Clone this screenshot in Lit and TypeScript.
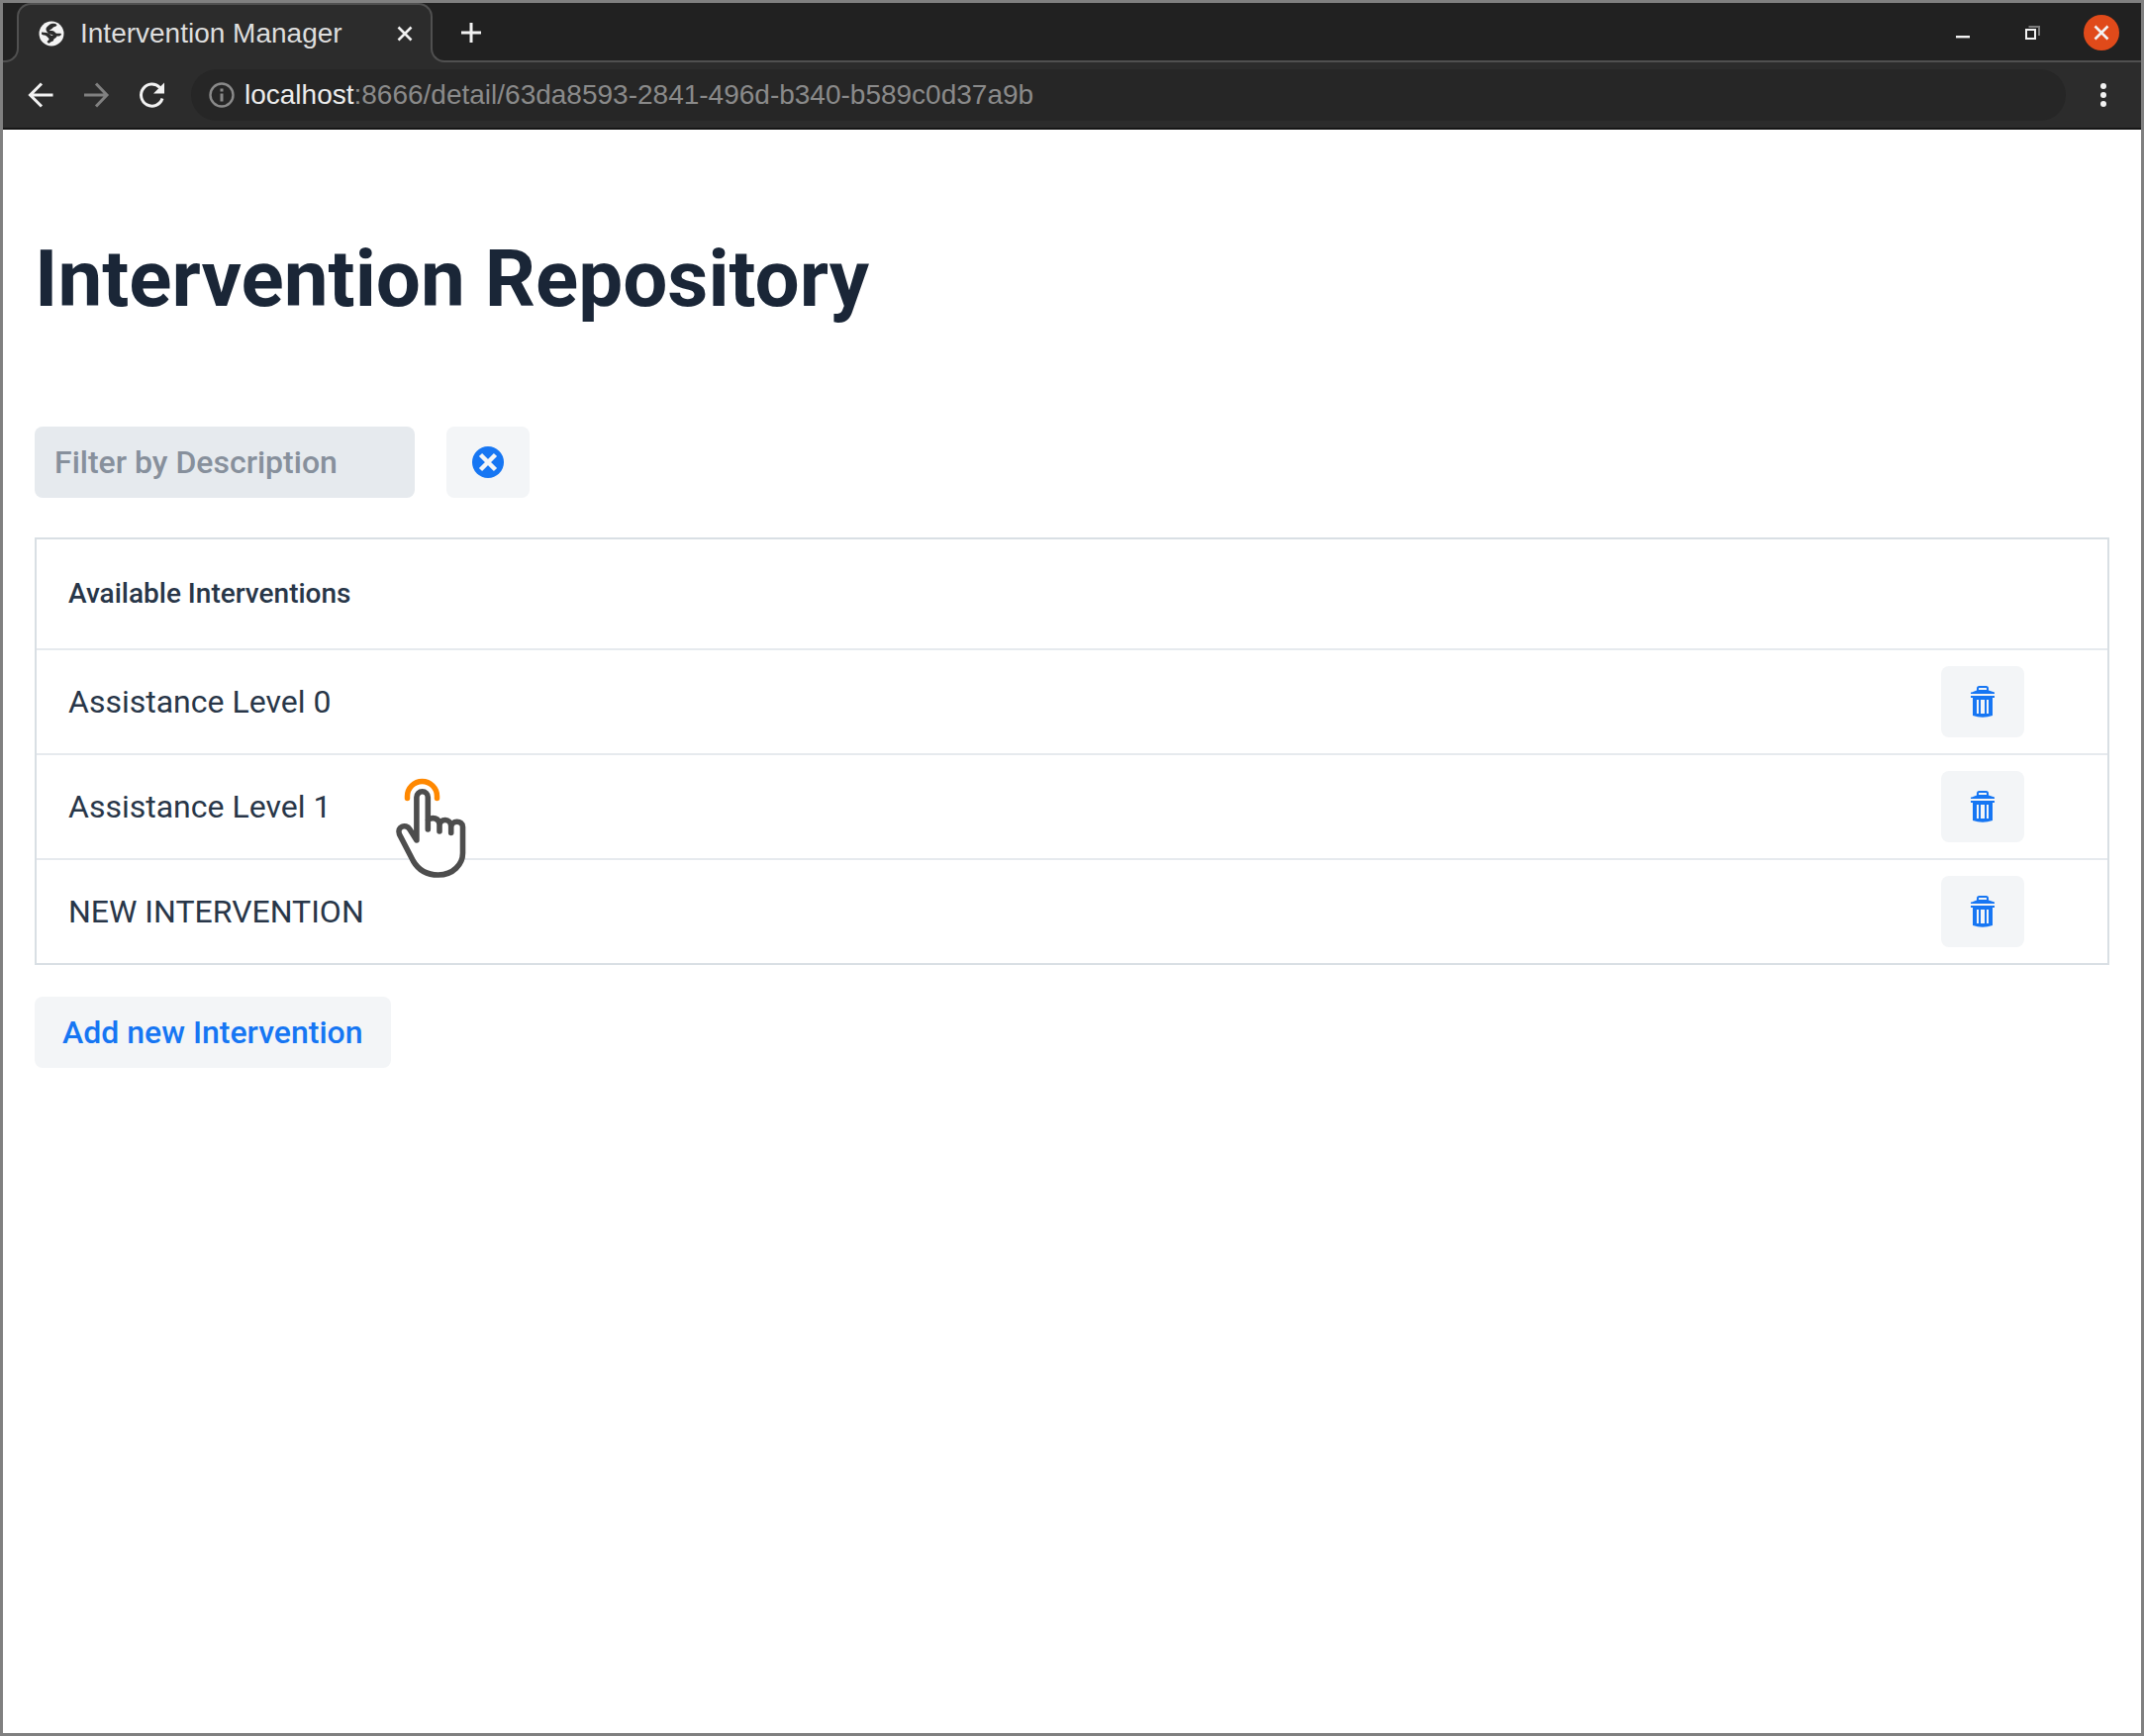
import { LitElement, html, css, svg } from "lit";
import { customElement, state, property } from "lit/decorators.js";

@customElement("browser-bar")
export class BrowserBar extends LitElement {
  @property() title = "";
  @property() host = "";
  @property() path = "";

  static styles = css`
    :host {
      display: block;
      background: #2c2c2c;
      border-bottom: 2px solid #161616;
      font-family: "Liberation Sans", Arial, sans-serif;
      font-size: 28px;
      line-height: 32px;
    }
    button {
      border: 0;
      padding: 0;
      background: none;
      color: #f2f2f2;
      display: flex;
      align-items: center;
      justify-content: center;
      flex: none;
    }
    svg {
      display: block;
      fill: none;
      stroke: currentColor;
      overflow: visible;
    }
    .strip {
      display: flex;
      align-items: flex-end;
      height: 60px;
      background: linear-gradient(#212121 30px, #2c2c2c 30px);
    }
    .lead,
    .rest {
      height: 46px;
      box-sizing: border-box;
      background: #212121;
      border: 0 solid #505050;
      border-bottom-width: 2px;
    }
    .lead {
      width: 16px;
      border-right-width: 2px;
      border-bottom-right-radius: 14px;
    }
    .rest {
      flex: 1;
      display: flex;
      align-items: center;
      padding: 0 22px 12px 28px;
      border-left-width: 2px;
      border-bottom-left-radius: 14px;
    }
    .tab {
      display: flex;
      align-items: center;
      box-sizing: border-box;
      width: 420px;
      height: 46px;
      margin: 0 -2px 14px;
      padding: 14px 18px 0 20px;
      background: #2c2c2c;
      color: #dedede;
      border: 2px solid #505050;
      border-bottom: 0;
      border-radius: 14px 14px 0 0;
    }
    .tab-title {
      flex: 1;
      margin-left: 16px;
      white-space: nowrap;
    }
    .spacer {
      flex: 1;
    }
    .windows {
      display: flex;
      align-items: center;
      gap: 34px;
    }
    .windows button {
      width: 36px;
      height: 36px;
    }
    .windows .close {
      border-radius: 50%;
      background: #e04a1a;
    }
    .tools {
      display: flex;
      align-items: center;
      height: 66px;
      box-sizing: border-box;
      padding: 0 24px;
      gap: 28px;
    }
    .tools .off {
      color: #808080;
    }
    .address {
      flex: 1;
      display: flex;
      align-items: center;
      gap: 10px;
      height: 52px;
      box-sizing: border-box;
      margin: 0 -4px 0 -2px;
      padding-left: 18px;
      border-radius: 26px;
      background: #262626;
      color: #8a8a8a;
      white-space: nowrap;
    }
    .address b {
      font-weight: 400;
      color: #ececec;
    }
  `;

  render() {
    return html`
      <div class="strip">
        <div class="lead"></div>
        <div class="tab">
          <svg width="26" height="26" viewBox="0 0 26 26">
            <circle cx="13" cy="13" r="12.5" fill="#f4f4f4" stroke="none" />
            <path d="M13 3C15.500 2.600 17.500 3.200 18.500 4.200C17.500 6.500 15 5.500 14 7.500C13 9 11.500 8.500 11 10C13 10 15.500 9.800 16.500 11.500C17.500 13.500 20.500 12.500 23 13C22.800 15.500 20.500 15.800 18.500 15.500C17.500 18 15.500 17.500 15.200 19.200C14.800 21.500 12 20.500 10.800 22.800C8.500 22.300 8 21 9.500 20C12 18.500 9.500 17 8 15.500C6.500 14.200 4.500 15 3 13.500V11.500C6.500 11.800 10 11.800 12 14.200C12.800 15.200 14 15 14.800 14.500C12.500 14 10.500 13.500 9 11.800C7.500 10 6.800 8 8.200 6.500C9.500 5.200 11 3.500 13 3z" fill="#2c2c2c" stroke="none" />
          </svg>
          <span class="tab-title">${this.title}</span>
          <button aria-label="Close tab">
            <svg width="16" height="16" viewBox="0 0 16 16" stroke-width="2.600"><path d="M1.500 1.500l13 13M14.500 1.500l-13 13" /></svg>
          </button>
        </div>
        <div class="rest">
          <button aria-label="New tab">
            <svg width="22" height="22" viewBox="0 0 22 22" stroke-width="3"><path d="M11 1v20M1 11h20" /></svg>
          </button>
          <span class="spacer"></span>
          <div class="windows">
            <button aria-label="Minimize">
              <svg width="16" height="16" viewBox="0 0 16 16" stroke-width="2.400"><path d="M1 12.200h14" /></svg>
            </button>
            <button aria-label="Restore">
              <svg width="16" height="16" viewBox="0 0 16 16" stroke-width="2">
                <path d="M4.500 2H15v9" stroke="#7c7c7c" /><rect x="2" y="5" width="9" height="9" />
              </svg>
            </button>
            <button class="close" aria-label="Close window">
              <svg width="16" height="16" viewBox="0 0 16 16" stroke-width="2.600"><path d="M1.500 1.500l13 13M14.500 1.500l-13 13" /></svg>
            </button>
          </div>
        </div>
      </div>
      <div class="tools">
        <button aria-label="Back">
          <svg width="28" height="28" viewBox="0 0 28 28" stroke-width="3"><path d="M26.500 14H4M15 2.500L3.500 14L15 25.500" /></svg>
        </button>
        <button class="off" aria-label="Forward">
          <svg width="28" height="28" viewBox="0 0 28 28" stroke-width="3"><path d="M2 14h22.500M14 2.500L25 14L14 25.500" /></svg>
        </button>
        <button aria-label="Reload">
          <svg width="28" height="28" viewBox="0 0 28 28" stroke-width="3">
            <path d="M25 17.500A11 11 0 1 1 22.500 6.500" /><path d="M27 1.500v11H16z" fill="currentColor" stroke="none" />
          </svg>
        </button>
        <div class="address">
          <svg width="26" height="26" viewBox="0 0 26 26" stroke="#8f979d" stroke-width="2.400">
            <circle cx="13" cy="13" r="11.500" /><path d="M13 11.500v8M13 6.500v3" stroke-width="3" />
          </svg>
          <span><b>${this.host}</b>${this.path}</span>
        </div>
        <button aria-label="Menu">
          <svg width="28" height="26" viewBox="0 0 28 26">
            <g fill="currentColor" stroke="none"><circle cx="14" cy="4" r="3" /><circle cx="14" cy="13" r="3" /><circle cx="14" cy="22" r="3" /></g>
          </svg>
        </button>
      </div>
    `;
  }
}

const trash = svg`
  <path d="M1 6.500L6 4.500V2.500Q6 0 8.500 0H15.500Q18 0 18 2.500V4.500L24 6.500V8H0V6.500zM8 2.500V4H16V2.500Q16 2 15.500 2H8.500Q8 2 8 2.500z" fill-rule="evenodd" />
  <path d="M0 10H24V12H22V30Q12 33.500 2 30V12H0zM6 14V28H8V14zM10 14V28H14V14zM16 14V28H18V14z" fill-rule="evenodd" />`;

@customElement("app-root")
export class AppRoot extends LitElement {
  @state() private filter = "";
  @state() private items = ["Assistance Level 0", "Assistance Level 1", "NEW INTERVENTION"];

  static styles = css`
    :host {
      display: flex;
      flex-direction: column;
      min-height: 100vh;
      box-sizing: border-box;
      border: 3px solid #808080;
      background: #fff;
      color: #283648;
      font-family: Roboto, sans-serif;
      font-size: 32px;
      line-height: 52px;
    }
    main {
      display: flex;
      flex-direction: column;
      align-items: flex-start;
      padding: 101px 32px 32px;
    }
    h1 {
      margin: 0;
      font-size: 80px;
      line-height: 100px;
      font-weight: 700;
      color: #1a2637;
    }
    .filter {
      display: flex;
      gap: 32px;
      margin: 99px 0 40px;
    }
    input,
    button {
      height: 72px;
      box-sizing: border-box;
      border: 0;
      border-radius: 8px;
      font: inherit;
      font-weight: 500;
    }
    input {
      width: 384px;
      padding: 0 20px;
      background: #e6eaee;
      color: #1a2637;
    }
    input::placeholder {
      color: #87909c;
      opacity: 1;
    }
    button {
      padding: 0 28px;
      background: #f3f5f7;
      color: #1676f3;
      cursor: pointer;
    }
    .icon {
      display: flex;
      align-items: center;
      justify-content: center;
      width: 84px;
      padding: 0;
    }
    .icon svg {
      display: block;
      fill: currentColor;
    }
    table {
      width: 100%;
      table-layout: fixed;
      border-collapse: separate;
      border-spacing: 0;
      border: 2px solid #d9dfe4;
      margin-bottom: 32px;
    }
    .actions {
      width: 200px;
    }
    th,
    td {
      box-sizing: border-box;
      padding: 0 32px;
      text-align: left;
      border-bottom: 2px solid #e6eaee;
    }
    th {
      height: 112px;
      font-size: 28px;
      font-weight: 500;
    }
    td {
      height: 106px;
    }
    tr:last-child td {
      height: 104px;
      border-bottom: 0;
    }
    .row {
      position: relative;
    }
    .pointer {
      position: absolute;
      left: 360px;
      top: 19px;
      pointer-events: none;
    }
  `;

  private onInput(e: Event) {
    this.filter = (e.target as HTMLInputElement).value;
  }

  private remove(item: string) {
    this.items = this.items.filter((i) => i !== item);
  }

  private pointer() {
    return html`<svg class="pointer" width="80" height="106" viewBox="0 0 80 106" fill="none" stroke-width="5.600" stroke-linecap="round" stroke-linejoin="round">
      <path d="M14.500 24.500V22.500a15 15 0 0 1 30 0V24.500" stroke="#ff8800" stroke-width="5.500" />
      <path d="M35.300 56V23.500a5.700 5.700 0 0 0-11.400 0V67L17 56C13 49.500 3.500 53.500 6.500 61L20.500 88C26 97.500 34 102 45.700 102C61 102 70.500 91 70.500 80V53.500C70.500 46.500 58.700 46.500 58.700 54V59.500V53C58.700 44.500 47 44.500 47 52V58V51C47 44.500 39.500 43 35.300 46.500" stroke="#4d4d4d" fill="#fff" />
    </svg>`;
  }

  render() {
    const shown = this.items.filter((i) => i.toLowerCase().includes(this.filter.toLowerCase()));
    return html`
      <browser-bar title="Intervention Manager" host="localhost" path=":8666/detail/63da8593-2841-496d-b340-b589c0d37a9b"></browser-bar>
      <main>
        <h1>Intervention Repository</h1>
        <div class="filter">
          <input type="text" aria-label="Filter by Description" placeholder="Filter by Description" .value=${this.filter} @input=${this.onInput} />
          <button class="icon" aria-label="Clear filter" @click=${() => (this.filter = "")}>
            <svg width="32" height="32" viewBox="0 0 32 32">
              <circle cx="16" cy="16" r="16" /><path d="M8.500 8.500l15 15M23.500 8.500l-15 15" stroke="#f3f5f7" stroke-width="4.500" />
            </svg>
          </button>
        </div>
        <table>
          <colgroup><col /><col class="actions" /></colgroup>
          <thead>
            <tr><th scope="col">Available Interventions</th><th></th></tr>
          </thead>
          <tbody>
            ${shown.map(
              (item) => html`<tr>
                <td class="row">${item}${item === "Assistance Level 1" ? this.pointer() : ""}</td>
                <td>
                  <button class="icon" aria-label="Delete ${item}" @click=${() => this.remove(item)}>
                    <svg width="24" height="32" viewBox="0 0 24 32">${trash}</svg>
                  </button>
                </td>
              </tr>`
            )}
          </tbody>
        </table>
        <button>Add new Intervention</button>
      </main>
    `;
  }
}
